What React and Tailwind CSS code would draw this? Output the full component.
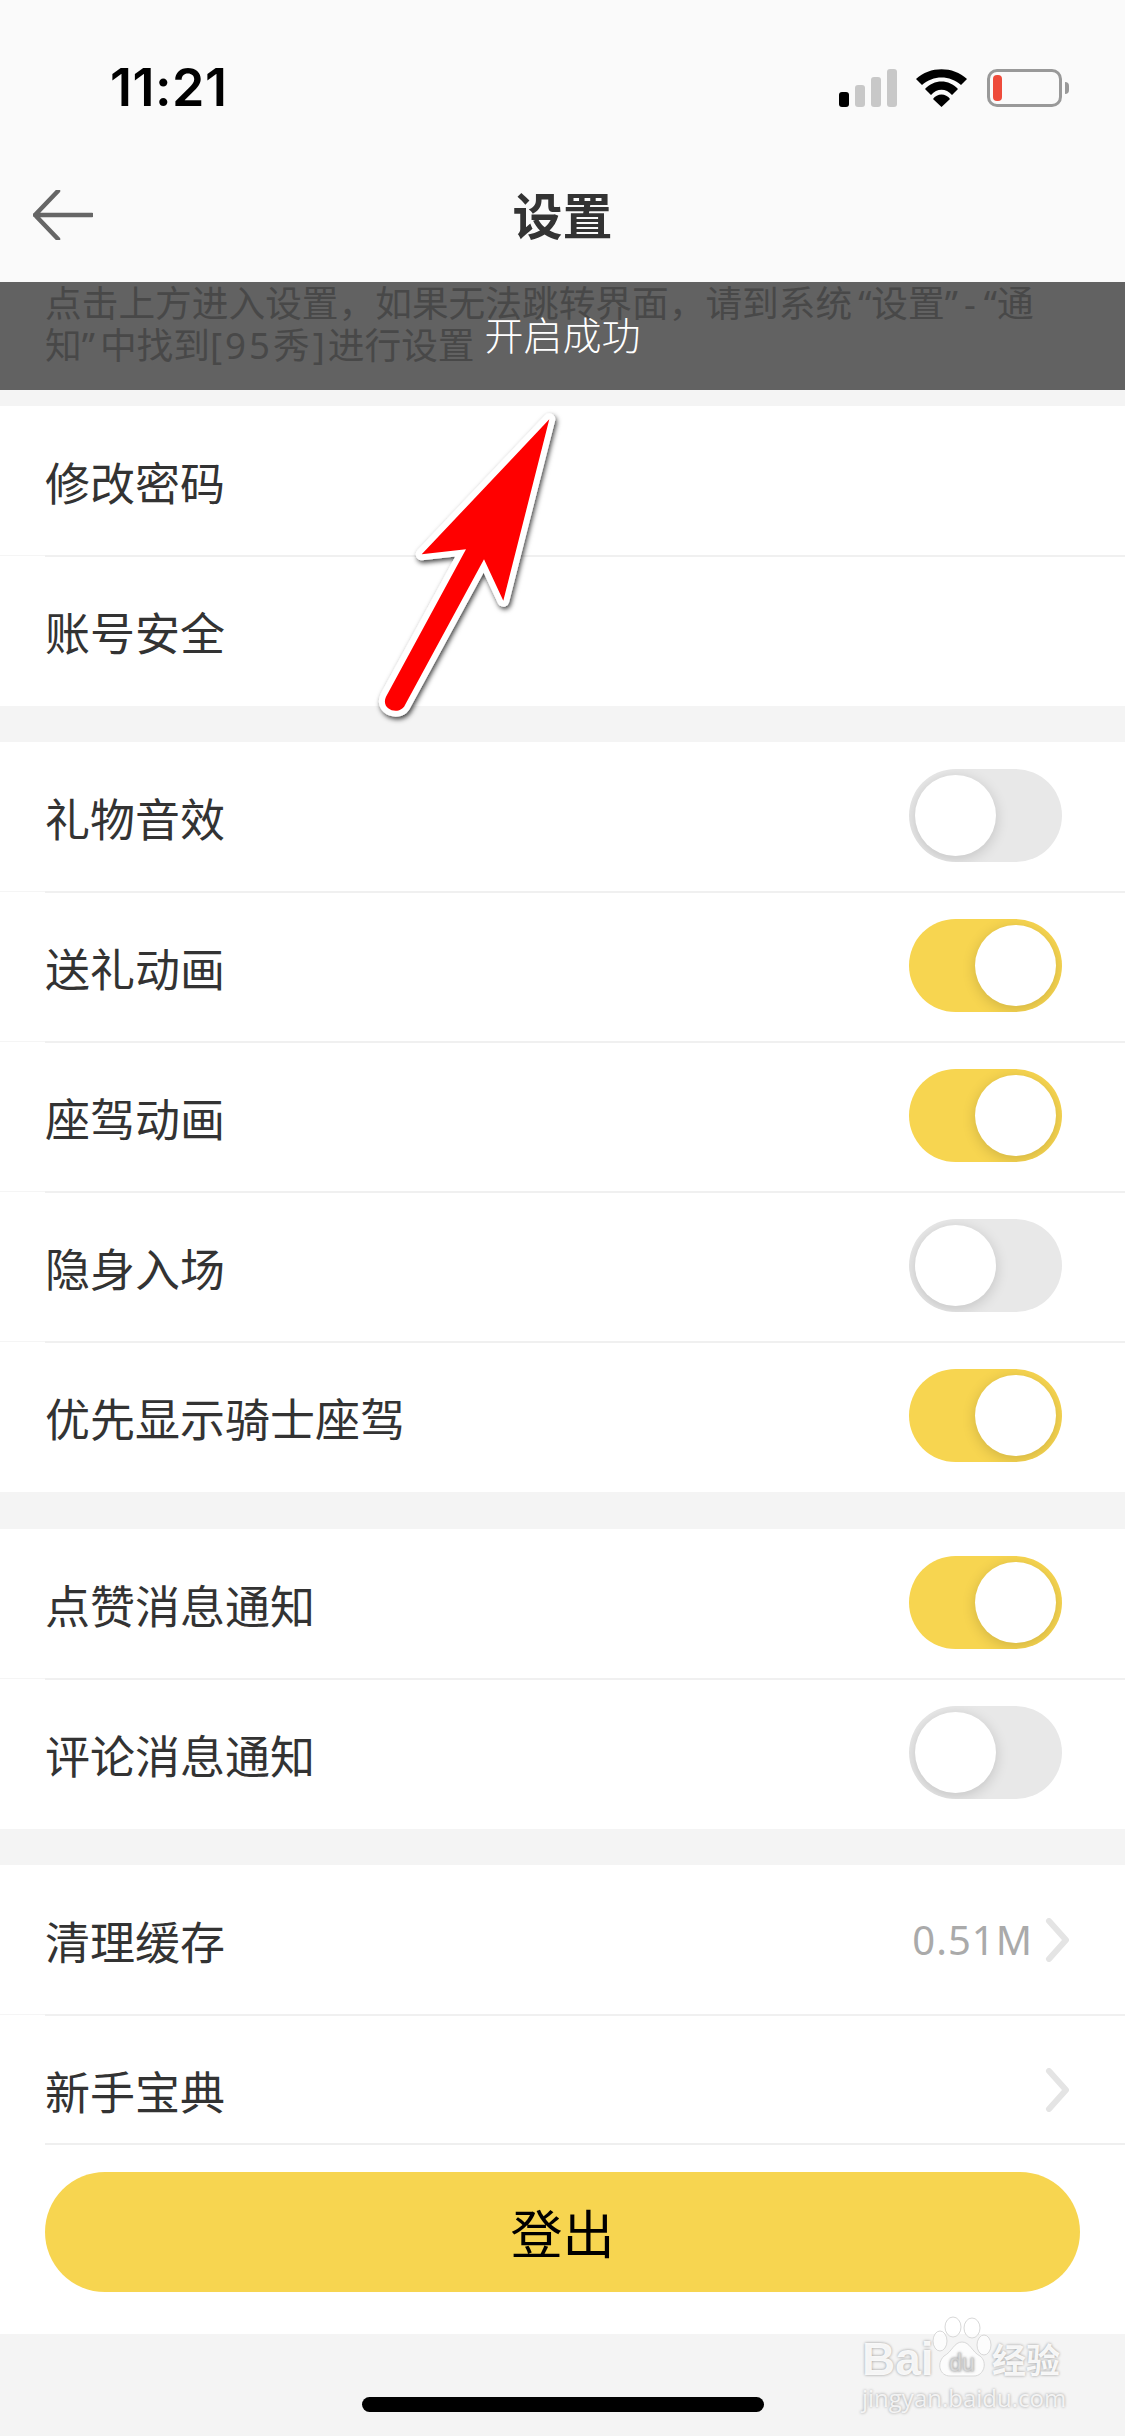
import React from "react";

const cjk = "font-['Noto_Sans_CJK_SC','Noto_Sans',sans-serif]";

// Toggle switch used in the settings rows
function Toggle({ on }) {
  return (
    <div
      className={`relative mr-[7px] mb-[3px] w-[153px] h-[93px] rounded-full overflow-hidden flex items-center px-[6px] ${
        on ? "bg-[#f7d550] justify-end" : "bg-[#e8e8e8] justify-start"
      }`}
    >
      <div className="w-[81px] h-[81px] rounded-full bg-white shadow-[0_3px_14px_rgba(0,0,0,0.16)]" />
    </div>
  );
}

function Chevron() {
  return (
    <svg width="26" height="44" viewBox="0 0 26 44" fill="none">
      <path d="M4 3 L21 22 L4 41" stroke="#e4e4e4" strokeWidth="6" strokeLinecap="round" strokeLinejoin="round" />
    </svg>
  );
}

function Row({ label, children, last }) {
  return (
    <div className="h-[150px] relative flex items-center justify-between pl-[45px] pr-[56px]">
      <span className="text-[45px] leading-none text-[#333333]">{label}</span>
      {children}
      {!last && (
        <>
          <div className="absolute left-0 w-[45px] top-[149px] h-[1px] bg-[#f5f5f5]" />
          <div className="absolute left-[45px] right-0 top-[149px] h-[2px] bg-[#f0f0f0]" />
        </>
      )}
    </div>
  );
}

function StatusIcons() {
  return (
    <div className="flex items-center">
      <svg width="60" height="38" viewBox="0 0 60 38">
        <rect x="0" y="23" width="10" height="15" rx="3" fill="#000" />
        <rect x="16" y="16" width="10" height="22" rx="3" fill="#c8c8c8" />
        <rect x="32" y="8" width="10" height="30" rx="3" fill="#c8c8c8" />
        <rect x="48" y="0" width="10" height="38" rx="3" fill="#c8c8c8" />
      </svg>
      <svg className="ml-[17px]" width="52" height="38" viewBox="0 0 52 38" fill="none">
        <path d="M0 10 C14 -3 37 -3 51 10 L45 16 C34 6 17 6 6 16 Z" fill="#000" />
        <path d="M9 20 C18 10 33 10 42 20 L36 26 C30 19 21 19 15 26 Z" fill="#000" />
        <path d="M17 30 C21 24 30 24 34 30 L25.5 38 Z" fill="#000" />
      </svg>
      <div className="ml-[19px] w-[75px] h-[38px] rounded-[10px] border-[3px] border-[#999999] p-[3px]">
        <div className="w-[9px] h-full rounded-[4px] bg-[#ee4b3b]" />
      </div>
      <div className="ml-[3px] w-[4px] h-[12px] rounded-r-full bg-[#999999]" />
    </div>
  );
}

export default function App() {
  return (
    <div className={`relative w-[1125px] h-[2436px] overflow-hidden bg-[#f4f4f4] ${cjk}`}>
      {/* Status bar and nav */}
      <div className="h-[282px] bg-[#fafafa] flex flex-col">
        <div className="h-[69px]" />
        <div className="h-[38px] flex items-center justify-between pl-[110px] pr-[56px]">
          <span className="font-['Inter',sans-serif] font-semibold text-[52px] leading-none text-black tracking-[0.5px]">
            11:21
          </span>
          <StatusIcons />
        </div>
        <div className="h-[83px]" />
        <div className="relative h-[50px] flex items-center justify-center">
          <svg className="absolute left-[33px] top-0" width="60" height="50" viewBox="0 0 60 50" fill="none">
            <path d="M25 1 L2 25 L25 49 M2 25 H59" stroke="#666666" strokeWidth="4.5" strokeLinecap="round" strokeLinejoin="round" />
          </svg>
          <span className="mb-[5px] text-[50px] leading-none font-bold text-[#333333]">设置</span>
        </div>
      </div>

      {/* Notice text, mostly hidden by the toast */}
      <div className="h-[108px] pl-[45px] pr-[40px]">
        <p className="font-['Noto_Sans','Noto_Sans_CJK_SC',sans-serif] text-[36.7px] leading-[42px] text-[#b5b5b5]">
          点击上方进入设置，如果无法跳转界面，请到系统
          <span className="pl-[6px]">“</span>设置<span className="pr-[6px]">”</span>-<span className="pl-[8px]">“</span>通知<span className="pr-[5px]">”</span>
          中找到<span className="tracking-[3px]">[95秀]</span>进行设置
        </p>
      </div>
      <div className="h-[16px]" />

      <div className="bg-white">
        <Row label="修改密码" />
        <Row label="账号安全" last />
      </div>

      <div className="h-[36px]" />
      <div className="bg-white">
        <Row label="礼物音效"><Toggle /></Row>
        <Row label="送礼动画"><Toggle on /></Row>
        <Row label="座驾动画"><Toggle on /></Row>
        <Row label="隐身入场"><Toggle /></Row>
        <Row label="优先显示骑士座驾" last><Toggle on /></Row>
      </div>

      <div className="h-[37px]" />
      <div className="bg-white">
        <Row label="点赞消息通知"><Toggle on /></Row>
        <Row label="评论消息通知" last><Toggle /></Row>
      </div>

      <div className="h-[36px]" />
      <div className="bg-white">
        <Row label="清理缓存">
          <div className="flex items-center gap-[12px] -mr-[2px]">
            <span className="text-[40px] leading-none text-[#aaaaaa] tracking-[1px] font-['Noto_Sans',sans-serif]">0.51M</span>
            <Chevron />
          </div>
        </Row>
        <Row label="新手宝典">
          <div className="-mr-[2px]"><Chevron /></div>
        </Row>
      </div>

      {/* Footer button pinned over the list bottom */}
      <div className="absolute left-0 right-0 top-[2143px] h-[191px] bg-white">
        <div className="ml-[45px] h-[2px] bg-[#efefef]" />
        <div className="mt-[27px] mx-[45px] h-[120px] rounded-full bg-[#f7d550] flex items-center justify-center">
          <span className="text-[52px] leading-none text-black">登出</span>
        </div>
      </div>

      {/* Home indicator */}
      <div className="absolute left-[362px] top-[2397px] w-[402px] h-[15px] rounded-[8px] bg-black" />

      {/* Red annotation arrow */}
      <svg className="absolute left-[360px] top-[400px]" width="210" height="330" viewBox="0 0 210 330" fill="none">
        <defs>
          <filter id="arrowShadow" x="-20%" y="-20%" width="140%" height="140%">
            <feDropShadow dx="1.5" dy="2.5" stdDeviation="2.5" floodColor="#000" floodOpacity="0.75" />
          </filter>
        </defs>
        <path
          d="M189.3 19.3 L61.7 154.3 L106 149.3 L26 296.7 C20 310 40 316 45 305 L124 159.3 L143.3 200.7 Z"
          fill="#ff0000"
          stroke="#ffffff"
          strokeWidth="12"
          strokeLinejoin="round"
          paintOrder="stroke"
          filter="url(#arrowShadow)"
        />
      </svg>

      {/* Toast over the notice */}
      <div className="absolute left-0 right-0 top-[282px] h-[108px] bg-[rgba(0,0,0,0.6)] flex justify-center pt-[32px]">
        <span className="text-[39px] leading-none font-light text-white">开启成功</span>
      </div>

      {/* Watermark */}
      <div className="absolute left-[862px] top-[2310px] w-[210px] h-[110px] text-white [text-shadow:0_0_3px_rgba(0,0,0,0.4)]">
        <svg className="absolute left-[70px] top-[4px]" width="60" height="66" viewBox="0 0 60 66">
          <g fill="rgba(255,255,255,0.75)" stroke="#d8d8d8" strokeWidth="1">
            <ellipse cx="21" cy="13" rx="8" ry="10" />
            <ellipse cx="40" cy="14" rx="8" ry="10" />
            <ellipse cx="8" cy="27" rx="7" ry="10" />
            <ellipse cx="52" cy="31" rx="7" ry="10" />
            <path d="M30 28 C38 28 40 38 48 42 C56 48 52 62 42 62 H18 C8 62 4 50 12 42 C20 38 22 28 30 28 Z" />
          </g>
          <text x="30" y="57" textAnchor="middle" fontSize="23" fontFamily="Liberation Sans" fill="#efefef" stroke="#cccccc" strokeWidth="0.5">du</text>
        </svg>
        <span className="absolute left-[0px] top-[26px] font-['Liberation_Sans',sans-serif] font-bold text-[46px] leading-none text-white/90">Bai</span>
        <span className="absolute left-[130px] top-[32px] text-[34px] leading-none font-bold text-white/90">经验</span>
        <span className="absolute left-0 top-[76px] font-['Open_Sans',sans-serif] text-[24px] leading-none text-white/80 whitespace-nowrap">jingyan.baidu.com</span>
      </div>
    </div>
  );
}
